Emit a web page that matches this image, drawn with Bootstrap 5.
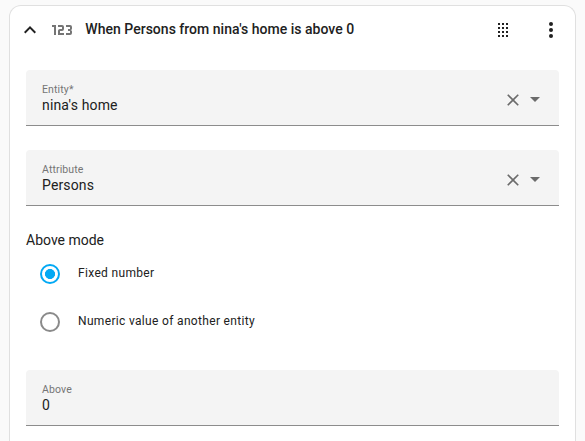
<!DOCTYPE html>
<html lang="en">
<head>
<meta charset="utf-8">
<meta name="viewport" content="width=device-width, initial-scale=1">
<title>Numeric state trigger</title>
<link href="https://cdn.jsdelivr.net/npm/bootstrap@5.3.0/dist/css/bootstrap.min.css" rel="stylesheet">
<style>
body{background:#fafafa;color:#212121;font-family:Roboto,sans-serif;height:441px}
.trigger{margin:5px 9px 0;height:436px;border:1px solid #e0e0e0;border-bottom:0;border-radius:12px 12px 0 0;padding:0 16px}
.trigger svg{display:block;flex:none;fill:currentColor}
.head{height:48px;margin:0 -4px 0 -8px}
.head h3{font-size:14px;font-weight:500;line-height:20px;letter-spacing:.02px;margin:0 0 2px 11.3px}
.type-icon{margin-left:8px;color:#757575}
.field{height:56px;background:#f4f4f4;border-bottom:1px solid #8c8c8c;border-radius:4px 4px 0 0;padding:0 12px 0 16px}
.field-label{font-size:10.5px;line-height:14px;letter-spacing:.12px;color:#757575;margin-top:13px}
.field-value{font-size:14px;line-height:16px;letter-spacing:.15px}
.field-icons{color:#6b6b6b;padding-top:4px}
.mode-title{font-size:14px;line-height:20px;margin-top:24px}
.option{height:48px;padding-left:14px;font-size:12px;letter-spacing:.33px}
.option input{appearance:none;width:20px;height:20px;border:2px solid #8a8a8a;border-radius:50%;margin:0 18px 0 0;background:#fff}
.option input:checked{border-color:#03a9f4;background:radial-gradient(circle,#03a9f4 4.7px,transparent 5.3px)}
.option span{line-height:20px;margin-bottom:2px}
</style>
</head>
<body class="overflow-hidden">
<main class="trigger bg-white">
  <header class="head d-flex align-items-center">
    <svg width="24" height="24" viewBox="0 0 24 24"><path d="M7.41 15.41L12 10.83l4.59 4.58L18 14l-6-6-6 6z"/></svg>
    <svg class="type-icon" width="24" height="24" viewBox="0 0 24 24"><path d="M4 17V9H2V7h4v10H4m18-2a2 2 0 0 1-2 2h-4v-2h4v-2h-2v-2h2V9h-4V7h4a2 2 0 0 1 2 2v1.5a1.5 1.5 0 0 1-1.5 1.5 1.5 1.5 0 0 1 1.5 1.5V15m-8 0v2H8v-4c0-1.11.9-2 2-2h2V9H8V7h4a2 2 0 0 1 2 2v2a2 2 0 0 1-2 2h-2v2h4z"/></svg>
    <h3>When Persons from nina's home is above 0</h3>
    <div class="d-flex ms-auto gap-4">
      <svg width="24" height="24" viewBox="0 0 24 24" shape-rendering="crispEdges"><path d="M7 5h2v2H7zm4 0h2v2h-2zm4 0h2v2h-2zM7 9h2v2H7zm4 0h2v2h-2zm4 0h2v2h-2zm-8 4h2v2H7zm4 0h2v2h-2zm4 0h2v2h-2zm-8 4h2v2H7zm4 0h2v2h-2zm4 0h2v2h-2z"/></svg>
      <svg width="24" height="24" viewBox="0 0 24 24"><circle cx="12" cy="6" r="2"/><circle cx="12" cy="12" r="2"/><circle cx="12" cy="18" r="2"/></svg>
    </div>
  </header>
  <div class="field d-flex mt-3">
    <div><div class="field-label">Entity*</div><div class="field-value">nina's home</div></div>
    <div class="field-icons d-flex align-items-center ms-auto">
      <svg width="20" height="20" viewBox="0 0 24 24"><path d="M19 6.41L17.59 5 12 10.59 6.41 5 5 6.41 10.59 12 5 17.59 6.41 19 12 13.41 17.59 19 19 17.59 13.41 12z"/></svg>
      <svg width="24" height="24" viewBox="0 0 24 24"><path d="M7 9l5 5 5-5z"/></svg>
    </div>
  </div>
  <div class="field d-flex mt-4">
    <div><div class="field-label">Attribute</div><div class="field-value">Persons</div></div>
    <div class="field-icons d-flex align-items-center ms-auto">
      <svg width="20" height="20" viewBox="0 0 24 24"><path d="M19 6.41L17.59 5 12 10.59 6.41 5 5 6.41 10.59 12 5 17.59 6.41 19 12 13.41 17.59 19 19 17.59 13.41 12z"/></svg>
      <svg width="24" height="24" viewBox="0 0 24 24"><path d="M7 9l5 5 5-5z"/></svg>
    </div>
  </div>
  <div class="mode-title">Above mode</div>
  <label class="option d-flex align-items-center"><input type="radio" name="mode" checked><span>Fixed number</span></label>
  <label class="option d-flex align-items-center"><input type="radio" name="mode"><span>Numeric value of another entity</span></label>
  <div class="field d-flex mt-4">
    <div><div class="field-label">Above</div><div class="field-value">0</div></div>
  </div>
</main>
<script src="https://cdn.jsdelivr.net/npm/bootstrap@5.3.0/dist/js/bootstrap.bundle.min.js"></script>
</body>
</html>
